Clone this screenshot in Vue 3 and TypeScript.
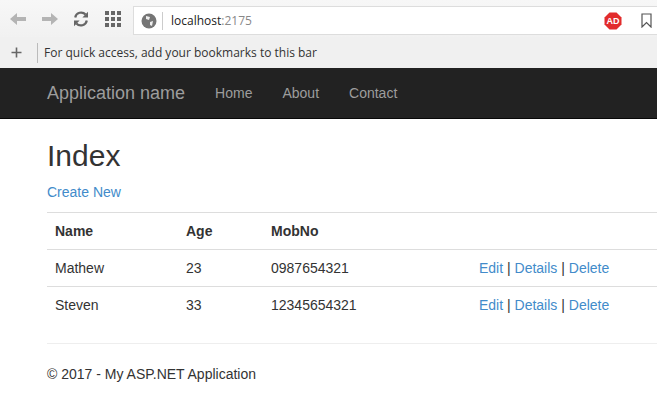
<script setup lang="ts">
const rows = [
  { name: 'Mathew', age: 23, mob: '0987654321' },
  { name: 'Steven', age: 33, mob: '12345654321' },
]
</script>

<template>
  <div class="page">
    <div class="toolbar">
      <svg class="ic back" width="18" height="14" viewBox="0 0 18 14"><path d="M1 7 L8 1 V5 H17 V9 H8 V13 Z" fill="#b4b4b4" /></svg>
      <svg class="ic fwd" width="18" height="14" viewBox="0 0 18 14"><path d="M17 7 L10 1 V5 H1 V9 H10 V13 Z" fill="#b4b4b4" /></svg>
      <svg class="ic reload" width="16" height="16" viewBox="0 0 16 16">
        <path d="M2.2 6.5 A6 6 0 0 1 12.6 3.6 M13.8 9.5 A6 6 0 0 1 3.4 12.4" fill="none" stroke="#666" stroke-width="2.2" />
        <path d="M15 0.8 V6.4 H9.4 Z M1 15.2 V9.6 H6.6 Z" fill="#666" />
      </svg>
      <div class="apps">
        <i v-for="n in 9" :key="n"></i>
      </div>
      <div class="omni">
        <svg class="globe" width="16" height="16" viewBox="0 0 16 16">
          <circle cx="8" cy="8" r="7.5" fill="#757575" />
          <path d="M5 3 L9 4 L8 7 L5 6 Z M9 9 L12 8 L11 13 L9 12 Z" fill="#eee" />
        </svg>
        <span class="sep"></span>
        <span class="url">localhost<span class="port">:2175</span></span>
        <span class="spacer"></span>
        <svg class="adblock" width="18" height="18" viewBox="0 0 18 18">
          <path d="M5.5 0.5 H12.5 L17.5 5.5 V12.5 L12.5 17.5 H5.5 L0.5 12.5 V5.5 Z" fill="#e22c2c" />
          <text x="9" y="12.4" text-anchor="middle" class="adtext">AD</text>
        </svg>
        <svg class="star" width="11" height="15" viewBox="0 0 11 15"><path d="M1 1 H10 V14 L5.5 9.5 L1 14 Z" fill="none" stroke="#555" stroke-width="1.2" /></svg>
      </div>
    </div>
    <div class="bookmarks">
      <svg class="plus" width="11" height="11" viewBox="0 0 11 11"><path d="M5.5 0.5 V10.5 M0.5 5.5 H10.5" stroke="#666" stroke-width="1.6" /></svg>
      <span class="bsep"></span>
      <span class="hint">For quick access, add your bookmarks to this bar</span>
    </div>
    <nav class="navbar">
      <a class="brand">Application name</a>
      <a class="navlink">Home</a>
      <a class="navlink">About</a>
      <a class="navlink">Contact</a>
    </nav>
    <main class="body">
      <h2>Index</h2>
      <p class="create"><a>Create New</a></p>
      <table>
        <thead>
          <tr>
            <th class="c1">Name</th>
            <th class="c2">Age</th>
            <th class="c3">MobNo</th>
            <th></th>
          </tr>
        </thead>
        <tbody>
          <tr v-for="r in rows" :key="r.name">
            <td>{{ r.name }}</td>
            <td>{{ r.age }}</td>
            <td>{{ r.mob }}</td>
            <td><a>Edit</a> | <a>Details</a> | <a>Delete</a></td>
          </tr>
        </tbody>
      </table>
      <hr />
      <footer>© 2017 - My ASP.NET Application</footer>
    </main>
  </div>
</template>

<style>
html, body { margin: 0; background: #fff; overflow: hidden; }
</style>

<style scoped>
.page { width: 657px; height: 420px; overflow: hidden; font-family: "Liberation Sans", Arial, sans-serif; font-size: 14px; color: #333; line-height: 20px; }
.toolbar { height: 37px; background: #f2f2f2; display: flex; align-items: center; box-sizing: border-box; padding-left: 9px; background: linear-gradient(#f7f7f7, #f1f1f1); }
.ic { flex: none; }
.fwd { margin-left: 14px; }
.reload { margin-left: 14px; }
.apps { margin-left: 16px; width: 16px; height: 16px; display: grid; grid-template-columns: repeat(3, 4px); grid-auto-rows: 4px; gap: 2px; flex: none; }
.apps i { background: #666; }
.omni { margin-left: 12px; flex: 1; height: 29px; margin-top: 4px; background: #fff; border: 1px solid #ddd; border-right: 0; box-sizing: border-box; display: flex; align-items: center; padding-left: 7px; padding-right: 5px; }
.sep { width: 1px; height: 18px; background: #ccc; margin-left: 5px; }
.url { margin-left: 8px; font-family: "Open Sans", sans-serif; font-size: 12px; color: #222; }
.port { color: #888; }
.spacer { flex: 1; }
.adtext { font: bold 9px "Liberation Sans", sans-serif; fill: #fff; }
.star { margin-left: 19px; }
.bookmarks { height: 31px; background: #f0f0f0; display: flex; align-items: center; padding-left: 11px; }
.bsep { width: 1px; height: 20px; background: #bbb; margin-left: 15px; }
.hint { margin-left: 6px; font-family: "Open Sans", sans-serif; font-size: 12px; color: #333; }
.navbar { height: 51px; background: #222; border-bottom: 1px solid #080808; box-sizing: border-box; display: flex; align-items: center; padding-left: 47px; color: #9d9d9d; }
.brand { font-size: 18px; margin-right: 30px; }
.navlink { margin-right: 30px; }
.body { padding: 0 0 0 47px; }
h2 { font-size: 30px; font-weight: 500; line-height: 33px; margin: 20px 0 10px; color: #333; }
.create { margin: 0 0 10px; }
a { color: #428bca; }
.navbar a { color: #9d9d9d; }
table { width: 610px; border-collapse: collapse; }
th, td { padding: 8px; text-align: left; line-height: 20px; border-top: 1px solid #ddd; }
th { font-weight: bold; border-bottom: 1px solid #ddd; }
.c1 { width: 115px; }
.c2 { width: 69px; }
.c3 { width: 192px; }
hr { border: 0; border-top: 1px solid #eee; margin: 20px 0; }
footer { line-height: 20px; }
</style>
